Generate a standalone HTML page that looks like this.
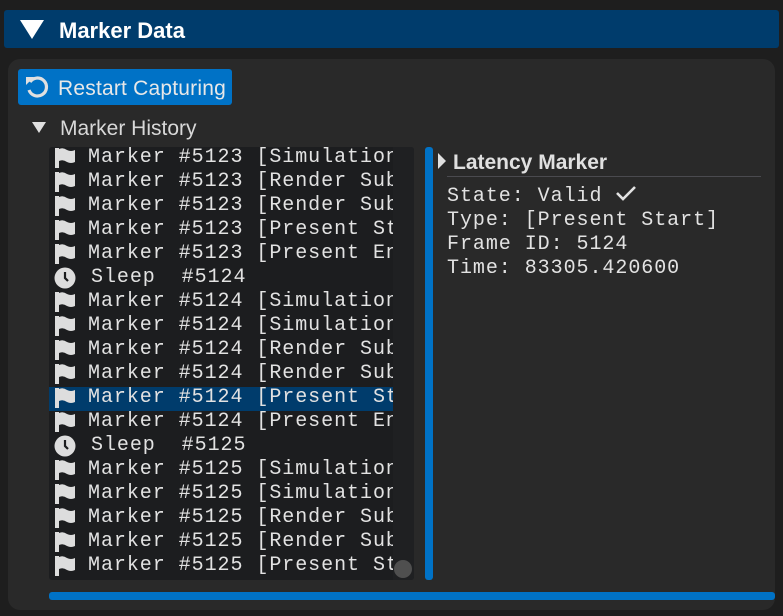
<!DOCTYPE html>
<html><head><style>
*{margin:0;padding:0;box-sizing:border-box}
body{width:783px;height:616px;background:#1e1e1e;position:relative;overflow:hidden;font-family:"Liberation Sans","DejaVu Sans",sans-serif;color:#e0e0e0}
.hdr{position:absolute;left:4px;top:10px;width:775px;height:38px;background:#003c6c;border-radius:3px}
.hdr .t{position:absolute;left:55px;top:8px;font-size:22px;font-weight:bold;color:#fff}
.panel{position:absolute;left:8px;top:59px;width:767px;height:551px;background:#292929;border-radius:12px}
.btn{position:absolute;left:18px;top:69px;width:214px;height:36px;background:#0072c6;border-radius:3px}
.btn span{position:absolute;left:40px;top:8px;font-size:21px;color:#e8e8e8;letter-spacing:0.2px}
.mh{position:absolute;left:60px;top:117px;font-size:21px;color:#d8d8d8}
.list{position:absolute;left:49px;top:147px;width:365px;height:433px;background:#1c1d1f;border-radius:3px;overflow:hidden}
.sb{position:absolute;left:344px;top:0;width:21px;height:433px;background:#1f2022}
.rows{position:absolute;left:0;top:0;width:344px;height:433px;overflow:hidden}
.row{height:24px;position:relative;font-family:"Liberation Mono","DejaVu Sans Mono",monospace;font-size:20px;letter-spacing:0.95px;white-space:pre;color:#e2e2e2;line-height:22px}
.row.sel{background:#003c6c}
.row .x{position:absolute;left:39px;top:0}
.row svg{position:absolute;left:5px;top:0px}
.thumb{position:absolute;left:345px;top:413px;width:18px;height:18px;border-radius:50%;background:#4f4f4f}
.vb{position:absolute;left:425px;top:147px;width:8px;height:433px;background:#0072c6;border-radius:3px}
.hb{position:absolute;left:49px;top:592px;width:726px;height:8px;background:#0072c6;border-radius:3px}
.lm{position:absolute;left:453px;top:151px;font-size:21px;font-weight:bold;color:#e0e0e0}
.line{position:absolute;left:447px;top:176px;width:314px;height:1px;background:#4a4a4f}
.info{position:absolute;left:447px;top:184px;font-family:"Liberation Mono","DejaVu Sans Mono",monospace;font-size:20px;letter-spacing:0.95px;line-height:24px;color:#e2e2e2;white-space:pre}
</style></head><body>
<div class="hdr"><svg style="position:absolute;left:16px;top:9px" width="26" height="22"><polygon points="0,1 24,1 12,20" fill="#fff"/></svg><div class="t">Marker Data</div></div>
<div class="panel"></div>
<div class="btn"><svg style="position:absolute;left:6px;top:5px" width="26" height="26" viewBox="0 0 26 26"><path d="M6 8 A9 9 0 1 1 5 16" fill="none" stroke="#e0e0e0" stroke-width="3.2"/><polygon points="2,3 10,3 2,11" fill="#e0e0e0"/></svg><span>Restart Capturing</span></div>
<svg style="position:absolute;left:31px;top:121px" width="16" height="14"><polygon points="1,1 15,1 8,12" fill="#e0e0e0"/></svg>
<div class="mh">Marker History</div>
<div class="list"><div class="sb"></div><div class="rows">
<div class="row"><svg width="22" height="22"><path d="M1 1h4v20H1z M5 2 q4-2 8 1 q4 2 8 0v12 q-4 2-8 0 q-4-3-8-1z" fill="#ddd"/></svg><span class="x">Marker #5123 [Simulation Start]</span></div>
<div class="row"><svg width="22" height="22"><path d="M1 1h4v20H1z M5 2 q4-2 8 1 q4 2 8 0v12 q-4 2-8 0 q-4-3-8-1z" fill="#ddd"/></svg><span class="x">Marker #5123 [Render Submit Start]</span></div>
<div class="row"><svg width="22" height="22"><path d="M1 1h4v20H1z M5 2 q4-2 8 1 q4 2 8 0v12 q-4 2-8 0 q-4-3-8-1z" fill="#ddd"/></svg><span class="x">Marker #5123 [Render Submit End]</span></div>
<div class="row"><svg width="22" height="22"><path d="M1 1h4v20H1z M5 2 q4-2 8 1 q4 2 8 0v12 q-4 2-8 0 q-4-3-8-1z" fill="#ddd"/></svg><span class="x">Marker #5123 [Present Start]</span></div>
<div class="row"><svg width="22" height="22"><path d="M1 1h4v20H1z M5 2 q4-2 8 1 q4 2 8 0v12 q-4 2-8 0 q-4-3-8-1z" fill="#ddd"/></svg><span class="x">Marker #5123 [Present End]</span></div>
<div class="row"><svg width="22" height="22"><circle cx="11" cy="11" r="10.5" fill="#ddd"/><path d="M11 5v6l3 3" stroke="#1c1d1f" stroke-width="2.2" fill="none"/></svg><span class="x" style="left:42px">Sleep  #5124</span></div>
<div class="row"><svg width="22" height="22"><path d="M1 1h4v20H1z M5 2 q4-2 8 1 q4 2 8 0v12 q-4 2-8 0 q-4-3-8-1z" fill="#ddd"/></svg><span class="x">Marker #5124 [Simulation Start]</span></div>
<div class="row"><svg width="22" height="22"><path d="M1 1h4v20H1z M5 2 q4-2 8 1 q4 2 8 0v12 q-4 2-8 0 q-4-3-8-1z" fill="#ddd"/></svg><span class="x">Marker #5124 [Simulation End]</span></div>
<div class="row"><svg width="22" height="22"><path d="M1 1h4v20H1z M5 2 q4-2 8 1 q4 2 8 0v12 q-4 2-8 0 q-4-3-8-1z" fill="#ddd"/></svg><span class="x">Marker #5124 [Render Submit Start]</span></div>
<div class="row"><svg width="22" height="22"><path d="M1 1h4v20H1z M5 2 q4-2 8 1 q4 2 8 0v12 q-4 2-8 0 q-4-3-8-1z" fill="#ddd"/></svg><span class="x">Marker #5124 [Render Submit End]</span></div>
<div class="row sel"><svg width="22" height="22"><path d="M1 1h4v20H1z M5 2 q4-2 8 1 q4 2 8 0v12 q-4 2-8 0 q-4-3-8-1z" fill="#ddd"/></svg><span class="x">Marker #5124 [Present Start]</span></div>
<div class="row"><svg width="22" height="22"><path d="M1 1h4v20H1z M5 2 q4-2 8 1 q4 2 8 0v12 q-4 2-8 0 q-4-3-8-1z" fill="#ddd"/></svg><span class="x">Marker #5124 [Present End]</span></div>
<div class="row"><svg width="22" height="22"><circle cx="11" cy="11" r="10.5" fill="#ddd"/><path d="M11 5v6l3 3" stroke="#1c1d1f" stroke-width="2.2" fill="none"/></svg><span class="x" style="left:42px">Sleep  #5125</span></div>
<div class="row"><svg width="22" height="22"><path d="M1 1h4v20H1z M5 2 q4-2 8 1 q4 2 8 0v12 q-4 2-8 0 q-4-3-8-1z" fill="#ddd"/></svg><span class="x">Marker #5125 [Simulation Start]</span></div>
<div class="row"><svg width="22" height="22"><path d="M1 1h4v20H1z M5 2 q4-2 8 1 q4 2 8 0v12 q-4 2-8 0 q-4-3-8-1z" fill="#ddd"/></svg><span class="x">Marker #5125 [Simulation End]</span></div>
<div class="row"><svg width="22" height="22"><path d="M1 1h4v20H1z M5 2 q4-2 8 1 q4 2 8 0v12 q-4 2-8 0 q-4-3-8-1z" fill="#ddd"/></svg><span class="x">Marker #5125 [Render Submit Start]</span></div>
<div class="row"><svg width="22" height="22"><path d="M1 1h4v20H1z M5 2 q4-2 8 1 q4 2 8 0v12 q-4 2-8 0 q-4-3-8-1z" fill="#ddd"/></svg><span class="x">Marker #5125 [Render Submit End]</span></div>
<div class="row"><svg width="22" height="22"><path d="M1 1h4v20H1z M5 2 q4-2 8 1 q4 2 8 0v12 q-4 2-8 0 q-4-3-8-1z" fill="#ddd"/></svg><span class="x">Marker #5125 [Present Start]</span></div>
</div><div class="thumb"></div></div>
<div class="vb"></div>
<svg style="position:absolute;left:437px;top:152px" width="10" height="18"><polygon points="1,1 9,9 1,17" fill="#e0e0e0"/></svg>
<div class="lm">Latency Marker</div>
<div class="line"></div>
<div class="info">State: Valid <svg width="22" height="18" style="vertical-align:-1px"><path d="M2 9l6 6L20 3" stroke="#e2e2e2" stroke-width="2.6" fill="none"/></svg>
Type: [Present Start]
Frame ID: 5124
Time: 83305.420600</div>
<div class="hb"></div>
</body></html>
